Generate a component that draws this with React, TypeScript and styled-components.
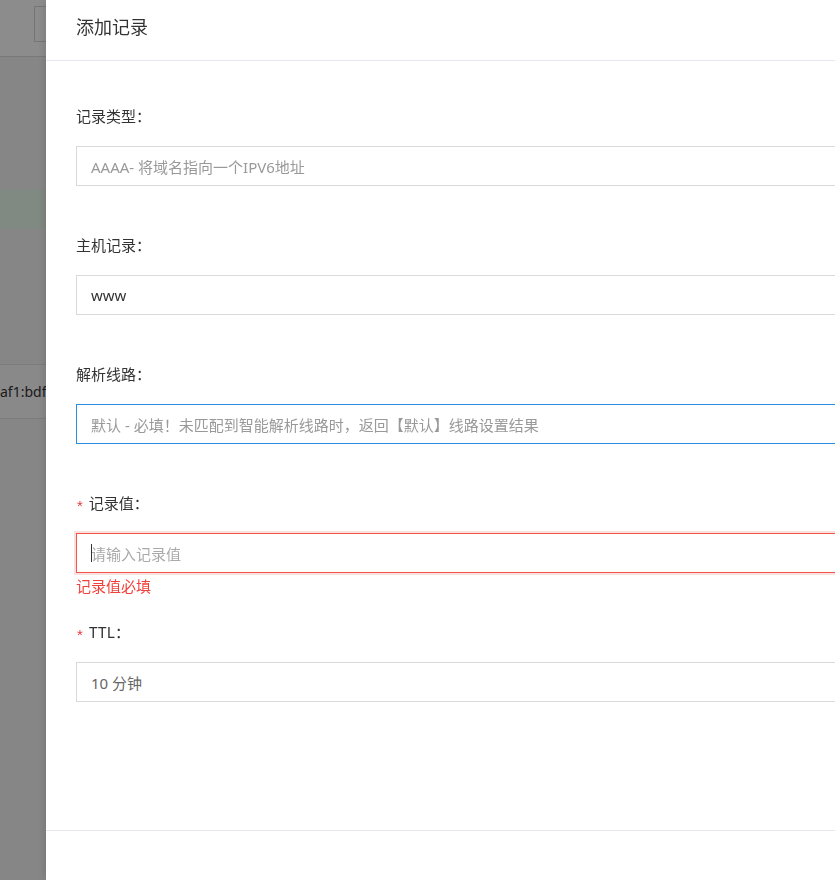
import React from "react";
import styled, { createGlobalStyle } from "styled-components";

const Global = createGlobalStyle`
  html, body { margin: 0; padding: 0; height: 100%; overflow: hidden; }
  body {
    font-family: "Noto Sans", "Noto Sans CJK SC", sans-serif;
    color: #333;
    background: #f5f5f5;
  }
  * { box-sizing: border-box; }
`;

/* ---------- underlying page ---------- */
const Page = styled.div`
  height: 880px;
  background: #f5f5f5;
  display: flex;
  flex-direction: column;
`;

const TopBar = styled.div`
  height: 57px;
  background: #ffffff;
  border-bottom: 1px solid #dcdcdc;
  padding: 6px 0 0 34px;
`;

const SearchBox = styled.div`
  width: 240px;
  height: 36px;
  border: 1px solid #d6d6d6;
  background: #fff;
`;

const Notice = styled.div`
  margin-top: 132px;
  height: 40px;
  background: #ebfaee;
`;

const Table = styled.div`
  margin-top: 135px;
  display: flex;
  flex-direction: column;
  border-top: 1px solid #e2e2e2;
  background: #f9f9f9;
`;

const Row = styled.div`
  height: 54px;
  border-bottom: 1px solid #e2e2e2;
  display: flex;
  align-items: center;
  font-size: 14px;
  color: #333;
  background: #f9f9f9;
`;

/* ---------- overlay + drawer ---------- */
const Mask = styled.div`
  position: fixed;
  inset: 0;
  background: rgba(0, 0, 0, 0.45);
`;

const Drawer = styled.div`
  position: fixed;
  top: 0;
  bottom: 0;
  left: 46px;
  width: 1000px;
  background: #fff;
  display: flex;
  flex-direction: column;
  box-shadow: -2px 0 8px rgba(0, 0, 0, 0.12);
`;

const Header = styled.div`
  height: 61px;
  border-bottom: 1px solid #e5e9ef;
  padding-left: 30px;
  display: flex;
  align-items: center;
  padding-bottom: 8px;
`;

const Title = styled.div`
  font-size: 18px;
  color: #333;
  font-family: "Noto Sans CJK SC", sans-serif;
`;

const Body = styled.div`
  flex: 1;
  padding: 45px 135px 0 30px;
  display: flex;
  flex-direction: column;
`;

const Footer = styled.div`
  height: 50px;
  border-top: 1px solid #e5e9ef;
`;

const FormItem = styled.div<{ $error?: boolean }>`
  display: flex;
  flex-direction: column;
  margin-bottom: ${(p) => (p.$error ? 26 : 49)}px;
`;

const Label = styled.div`
  font-size: 15px;
  line-height: 20px;
  height: 20px;
  color: #333;
  margin-bottom: 20px;
  display: flex;
  align-items: center;
  font-family: "Noto Sans CJK SC", sans-serif;
`;

const Star = styled.span`
  color: #e4393c;
  font-size: 15px;
  margin: 0 6px 0 1px;
  font-family: "Liberation Sans", sans-serif;
  transform: translateY(3px);
`;

const Field = styled.div<{ $state?: "focus" | "error" }>`
  position: relative;
  height: 40px;
  border: 1px solid
    ${(p) =>
      p.$state === "focus" ? "#2a8de3" : p.$state === "error" ? "#f0544a" : "#d9d9d9"};
  box-shadow: ${(p) =>
    p.$state === "error" ? "0 0 0 2px rgba(240, 84, 74, 0.18)" : "none"};
  background: #fff;
  display: flex;
  align-items: center;
  padding-left: 14px;
`;

const Value = styled.span<{ $tone: "dark" | "mid" | "light" }>`
  font-size: 15px;
  font-family: "Noto Sans", "Noto Sans CJK SC", sans-serif;
  color: ${(p) => (p.$tone === "dark" ? "#333" : p.$tone === "mid" ? "#666" : "#999")};
`;

const Input = styled.input`
  border: none;
  outline: none;
  flex: 1;
  height: 100%;
  padding: 0;
  font-size: 15px;
  font-family: "Noto Sans CJK SC", sans-serif;
  background: transparent;
  &::placeholder {
    color: #aaa;
  }
`;

const Caret = styled.span`
  position: absolute;
  left: 14px;
  top: 10px;
  width: 1px;
  height: 18px;
  background: #333;
`;

const ErrorText = styled.div`
  margin-top: 3px;
  font-size: 15px;
  line-height: 20px;
  color: #f0413a;
  font-family: "Noto Sans CJK SC", sans-serif;
`;

export default function App() {
  return (
    <>
      <Global />
      <Page>
        <TopBar>
          <SearchBox />
        </TopBar>
        <Notice />
        <Table>
          <Row>af1:bdf0::1</Row>
        </Table>
      </Page>
      <Mask />
      <Drawer>
        <Header>
          <Title>添加记录</Title>
        </Header>
        <Body>
          <FormItem>
            <Label>记录类型：</Label>
            <Field>
              <Value $tone="light">AAAA- 将域名指向一个IPV6地址</Value>
            </Field>
          </FormItem>
          <FormItem>
            <Label>主机记录：</Label>
            <Field>
              <Value $tone="dark">www</Value>
            </Field>
          </FormItem>
          <FormItem>
            <Label>解析线路：</Label>
            <Field $state="focus">
              <Value $tone="light">默认 - 必填！未匹配到智能解析线路时，返回【默认】线路设置结果</Value>
            </Field>
          </FormItem>
          <FormItem $error>
            <Label>
              <Star>*</Star>记录值：
            </Label>
            <Field $state="error">
              <Input placeholder="请输入记录值" readOnly />
              <Caret />
            </Field>
            <ErrorText>记录值必填</ErrorText>
          </FormItem>
          <FormItem>
            <Label>
              <Star>*</Star>TTL：
            </Label>
            <Field>
              <Value $tone="mid">10 分钟</Value>
            </Field>
          </FormItem>
        </Body>
        <Footer />
      </Drawer>
    </>
  );
}
